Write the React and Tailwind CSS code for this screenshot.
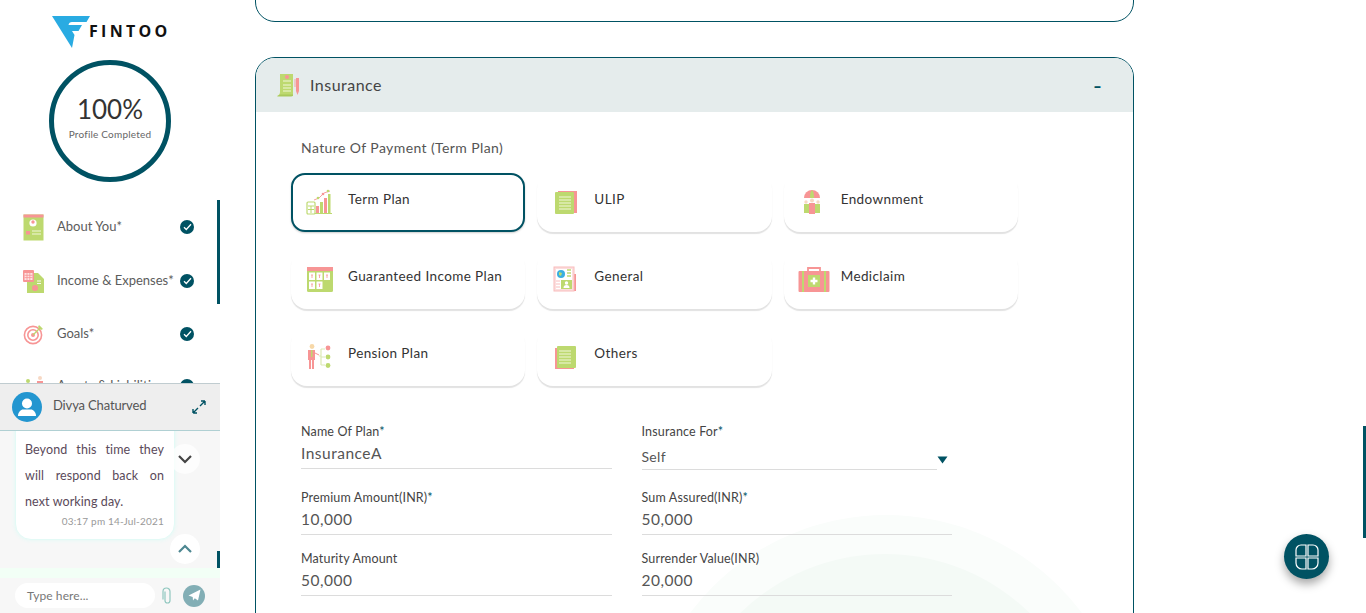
const G = "#bdd96f";
const R = "#f79595";
const T = "#005263";

const Doc = ({ flip }) => (
  <svg width="26" height="26" viewBox="0 0 26 26">
    <rect x={flip ? 3 : 6} y={flip ? 5 : 2} width="19" height="22" fill={R} />
    <rect x={flip ? 5 : 3} y={flip ? 3 : 3} width="19" height="22" rx="1" fill={G} />
    <path d="M7 8h12M7 11h12M7 14h12M7 17h12M7 20h12" stroke="#f1f7da" strokeWidth="1" />
  </svg>
);

const TermIcon = () => (
  <svg width="26" height="26" viewBox="0 0 26 26">
    <rect x="1" y="13" width="8" height="12" rx="1" fill="#fff" stroke={G} strokeWidth="1.2" />
    <path d="M2 17h6M5 17v7M2 20.5h6" stroke={G} strokeWidth="1" />
    <rect x="10" y="17" width="3" height="7" fill={R} />
    <rect x="14" y="13" width="3" height="11" fill={G} />
    <rect x="18" y="9" width="3" height="15" fill={R} />
    <rect x="22" y="5" width="2.5" height="19" fill={G} />
    <path d="M9 24.5h17" stroke={G} strokeWidth="1" />
    <path d="M8 11l5-2 5-5 6-2" fill="none" stroke={R} strokeWidth="0.9" />
    <circle cx="12" cy="9" r="1.3" fill={G} />
    <circle cx="17" cy="5" r="1.3" fill={R} />
    <circle cx="22" cy="2" r="1.3" fill={G} />
  </svg>
);

const EndowIcon = () => (
  <svg width="26" height="26" viewBox="0 0 26 26">
    <path d="M5 9a8 8 0 0 1 16 0z" fill={R} />
    <path d="M11 9a3 8 0 0 1 2-8 3 8 0 0 1 2 8z" fill={G} />
    <circle cx="13" cy="11.500" r="2" fill="#f7d8c4" />
    <circle cx="7" cy="13" r="1.7" fill="#f7d8c4" />
    <circle cx="19" cy="13" r="1.7" fill="#f7d8c4" />
    <rect x="5" y="15" width="5" height="9" fill={G} />
    <rect x="16" y="15" width="5" height="9" fill={G} />
    <rect x="10" y="14" width="6" height="11" fill={R} />
  </svg>
);

const GuaranteedIcon = () => (
  <svg width="28" height="26" viewBox="0 0 28 26">
    <rect x="1" y="1" width="26" height="25" rx="1.5" fill={G} />
    <rect x="1" y="1" width="26" height="4" fill={R} />
    {[[3, 6.5], [10.5, 6.5], [18, 6.5], [3, 15.5], [10.5, 15.5]].map(([x, y]) => (
      <g key={`${x}-${y}`}>
        <rect x={x} y={y} width="6" height="7.5" fill="#fff" />
        <path d={`M${x + 2} ${y + 2.5}h2M${x + 3} ${y + 2.5}v3`} stroke={R} strokeWidth="0.8" />
      </g>
    ))}
  </svg>
);

const GeneralIcon = () => (
  <svg width="26" height="26" viewBox="0 0 26 26">
    <rect x="20" y="8" width="4" height="17" fill={R} />
    <rect x="2" y="1" width="20" height="24" fill="#fbdede" stroke="#f9bcbc" />
    <rect x="4" y="3" width="16" height="20" fill="#fff" />
    <circle cx="9" cy="8" r="4" fill="#3aaee0" />
    <path d="M7 6l3 1-1 3-2-1z" fill={G} />
    <path d="M15 4h4M15 7h4M15 10h4" stroke={G} strokeWidth="1.4" />
    <rect x="9" y="14" width="11" height="9" fill={G} />
    <circle cx="14.5" cy="17" r="1.7" fill="#fff" />
    <path d="M11.5 22a3 3 0 0 1 6 0z" fill="#fff" />
    <path d="M4 15h4M4 18h4M4 21h4" stroke="#f9bcbc" strokeWidth="1" />
  </svg>
);

const MediIcon = () => (
  <svg width="32" height="26" viewBox="0 0 32 26" className="ml-[-1px]">
    <path d="M10 6V2h12v4" fill="none" stroke={R} strokeWidth="1.8" />
    <rect x="0.5" y="5" width="31" height="21" rx="1" fill={R} />
    <rect x="4" y="5" width="2" height="21" fill={G} />
    <rect x="26" y="5" width="2" height="21" fill={G} />
    <rect x="10" y="9" width="12" height="12" fill={G} />
    <path d="M16 11.5v7M12.5 15h7" stroke="#fff" strokeWidth="2.4" />
  </svg>
);

const PensionIcon = () => (
  <svg width="26" height="26" viewBox="0 0 26 26">
    <circle cx="6" cy="3.5" r="2.4" fill="#f7d8a8" />
    <rect x="2" y="7" width="7" height="10" fill={R} />
    <rect x="5" y="7" width="1.5" height="7" fill={G} />
    <rect x="3" y="17" width="2" height="9" fill={R} />
    <rect x="6" y="17" width="2" height="9" fill={R} />
    <path d="M9 10l4 2" stroke={R} strokeWidth="1" />
    <path d="M13 13h2M15 6v16M15 6h4M15 14h4M15 22h4" stroke="#dce9b5" strokeWidth="1.2" fill="none" />
    <circle cx="22" cy="5" r="2.4" fill={R} />
    <circle cx="22" cy="14" r="2.4" fill={G} />
    <circle cx="22" cy="22.5" r="2.4" fill={G} />
  </svg>
);

const ScrollIcon = () => (
  <svg width="26" height="27" viewBox="0 0 26 27">
    <path d="M4 2h13v22H1c2-1 3-2 3-4z" fill={G} />
    <path d="M1 24.5h14c2 0 2-1 2-2H4z" fill="#a9c95c" />
    <circle cx="11" cy="5" r="2" fill={R} />
    <path d="M7 9h8M7 13h8M7 16h8M7 19h8" stroke="#f1f7da" strokeWidth="1" />
    <path d="M20 6h3v13l-1.5 4L20 19z" fill={R} />
    <path d="M19 7v8" stroke={R} strokeWidth="0.8" />
  </svg>
);

const AboutIcon = () => (
  <svg width="21" height="27" viewBox="0 0 21 27">
    <rect x="0.5" y="0.5" width="20" height="26" fill={G} />
    <rect x="0.5" y="0.5" width="20" height="3" fill={R} />
    <circle cx="10" cy="9" r="3.6" fill="#fff" />
    <circle cx="10" cy="8" r="1.7" fill={R} />
    <rect x="3" y="17" width="4" height="3.5" fill={R} />
    <path d="M9 17h9M9 20h9" stroke="#f1f7da" strokeWidth="1" />
  </svg>
);

const IncomeIcon = () => (
  <svg width="21" height="23" viewBox="0 0 21 23">
    <path d="M4 3h11l6 6v14H4z" fill={G} />
    <path d="M14 11h4M14 13.5h4" stroke="#fff" strokeWidth="0.9" />
    <circle cx="12" cy="18" r="3" fill={R} />
    <rect x="0" y="0" width="11" height="12" rx="1" fill={R} />
    <rect x="1.5" y="3" width="8" height="7" fill="#fde3e3" />
    <path d="M1.5 5.3h8M1.5 7.6h8M4 3v7M6.8 3v7" stroke={R} strokeWidth="0.8" />
  </svg>
);

const GoalIcon = () => (
  <svg width="21" height="21" viewBox="0 0 21 21">
    <circle cx="10" cy="11" r="8.6" fill="none" stroke={R} strokeWidth="1.6" />
    <circle cx="10" cy="11" r="5.2" fill="none" stroke={R} strokeWidth="1.6" />
    <circle cx="10" cy="11" r="2" fill={R} />
    <path d="M10 11l8-8" stroke={G} strokeWidth="1.3" />
    <path d="M16 1l4 4-2 1-3-3z" fill={G} />
  </svg>
);

const AssetIcon = () => (
  <svg width="24" height="22" viewBox="0 0 24 22">
    <circle cx="5" cy="6" r="2" fill={G} />
    <rect x="2" y="9" width="6" height="10" fill={G} />
    <circle cx="17" cy="3" r="2" fill="#f7d8c4" />
    <rect x="14" y="6" width="6" height="12" fill={R} />
  </svg>
);

const Check = () => (
  <span className="flex h-[14px] w-[14px] shrink-0 items-center justify-center rounded-full bg-[#005263]">
    <svg width="9" height="8" viewBox="0 0 9 8">
      <path d="M1 4.2l2.3 2.3L8 1.3" fill="none" stroke="#fff" strokeWidth="1.3" />
    </svg>
  </span>
);

const navItems = [
  { label: "About You*", icon: <AboutIcon />, h: "h-[54px]" },
  { label: "Income & Expenses*", icon: <IncomeIcon />, h: "h-[54px]" },
  { label: "Goals*", icon: <GoalIcon />, h: "h-[52px]" },
  { label: "Assets & Liabilities", icon: <AssetIcon />, h: "h-[52px]" },
];

const Sidebar = () => (
  <aside className="relative h-[613px] w-[220px] shrink-0 overflow-hidden bg-white">
    <div className="flex h-[60px] items-start pl-[52px] pt-[16px]">
      <svg width="38" height="32" viewBox="0 0 38 32" className="shrink-0">
        <path d="M0 0H38L34.500 6H20Q17 6 16.500 9H30L26.500 15H20L22.500 19L20 32Z" fill="#29abe2" />
      </svg>
      <span className="ml-[-1px] mt-[3px] text-[16px] font-bold leading-[24px] tracking-[3.3px] text-[#111] [font-family:'Open_Sans',sans-serif]">
        FINTOO
      </span>
    </div>
    <div className="ml-[49px] flex h-[122px] w-[122px] flex-col items-center justify-center rounded-full border-[5px] border-[#005263]">
      <span className="mt-[-8px] text-[26px] leading-[32px] text-[#333]">100%</span>
      <span className="mt-[3px] text-[10px] leading-[13px] tracking-[0.2px] text-[#666]">Profile Completed</span>
    </div>
    <div className="pt-[18px]">
      {navItems.map((n) => (
        <div key={n.label} className={`flex items-center pl-[23px] pr-[26px] ${n.h}`}>
          <span className="flex w-[34px] shrink-0 items-center">{n.icon}</span>
          <span className="flex-1 whitespace-nowrap text-[13px] text-[#5c5c5c]">{n.label}</span>
          <Check />
        </div>
      ))}
    </div>
    <div className="absolute left-[217px] top-[200px] h-[104px] w-[3px] bg-[#005263]" />
    <ChatPanel />
  </aside>
);

const ChatPanel = () => (
  <div className="absolute inset-x-0 bottom-0 flex h-[230px] flex-col border-t border-[#c0ccd0] bg-[#f7f7f7]">
    <div className="flex h-[47px] shrink-0 items-center border-b border-[#b0d0d3] bg-[#eeeeee] pl-[12px] pr-[14px]">
      <span className="relative flex h-[30px] w-[30px] shrink-0 items-center justify-center overflow-hidden rounded-full bg-[#2396d0]">
        <svg width="30" height="30" viewBox="0 0 30 30">
          <circle cx="15" cy="11.500" r="5" fill="#fff" />
          <path d="M6 24c0-4 3-6.500 5-6.500h8c2 0 5 2.500 5 6.500z" fill="#fff" />
        </svg>
      </span>
      <span className="mb-[2px] ml-[11px] flex-1 text-[13px] tracking-[-0.15px] text-[#555]">Divya Chaturved</span>
      <svg width="14" height="14" viewBox="0 0 14 14">
        <path d="M8 6l5-5M13 1H9M13 1v4M6 8l-5 5M1 13h4M1 13V9" fill="none" stroke={T} strokeWidth="1.4" />
      </svg>
    </div>
    <div className="relative flex-1 overflow-hidden">
      <div className="ml-[15px] mt-[-10px] h-[119px] w-[160px] rounded-b-[16px] border border-[#e3faf6] bg-white pl-[9px] pr-[10px] pt-[15px] shadow-[0_0_4px_#dffaf6]">
        <p className="text-justify text-[12.500px] leading-[26px] tracking-[0.1px] text-[#5a4a5a] [text-align-last:justify]">
          Beyond this time they
        </p>
        <p className="text-justify text-[12.500px] leading-[26px] tracking-[0.1px] text-[#5a4a5a] [text-align-last:justify]">
          will respond back on
        </p>
        <p className="text-[12.500px] leading-[26px] tracking-[0.1px] text-[#5a4a5a]">next working day.</p>
        <p className="mt-[-1px] text-right text-[10px] leading-[14px] tracking-[0.2px] text-[#999]">03:17 pm 14-Jul-2021</p>
      </div>
      <button className="absolute left-[170px] top-[13px] flex h-[30px] w-[30px] items-center justify-center rounded-full bg-white/70">
        <svg width="16" height="10" viewBox="0 0 16 10">
          <path d="M2 2l6 6 6-6" fill="none" stroke="#444" strokeWidth="2.2" />
        </svg>
      </button>
      <button className="absolute left-[170px] top-[103px] flex h-[30px] w-[30px] items-center justify-center rounded-full bg-white">
        <svg width="16" height="10" viewBox="0 0 16 10">
          <path d="M2 8l6-6 6 6" fill="none" stroke="#4d8791" strokeWidth="2.2" />
        </svg>
      </button>
      <div className="absolute left-[217px] top-[120px] h-[18px] w-[3px] bg-[#005263]" />
    </div>
    <div className="h-[10px] shrink-0 bg-[#f2fff6]" />
    <div className="flex h-[35px] shrink-0 items-center pl-[15px]">
      <div className="flex h-[25px] w-[140px] items-center rounded-full bg-white pl-[12px] text-[12px] tracking-[0.1px] text-[#777]">
        Type here...
      </div>
      <svg width="12" height="17" viewBox="0 0 12 17" className="ml-[5px]">
        <path d="M4 4v9a2.500 2.500 0 0 0 5 0V4a3.500 3.500 0 0 0-7 0v8" transform="translate(1 .5)" fill="none" stroke="#8fc7bf" strokeWidth="1.2" />
      </svg>
      <span className="ml-[11px] flex h-[22px] w-[22px] items-center justify-center rounded-full bg-[#82aeb5]">
        <svg width="13" height="13" viewBox="0 0 13 13">
          <path d="M0.500 6.500L12.500 0.500 10 11.500 6.800 9.300 5 11.500 4.700 8z" fill="#fff" />
        </svg>
      </span>
    </div>
  </div>
);

const plans = [
  { label: "Term Plan", icon: <TermIcon />, active: true },
  { label: "ULIP", icon: <Doc /> },
  { label: "Endownment", icon: <EndowIcon /> },
  { label: "Guaranteed Income Plan", icon: <GuaranteedIcon /> },
  { label: "General", icon: <GeneralIcon /> },
  { label: "Mediclaim", icon: <MediIcon /> },
  { label: "Pension Plan", icon: <PensionIcon /> },
  { label: "Others", icon: <Doc flip /> },
];

const PlanCard = ({ label, icon, active }) => (
  <div
    className={`flex h-[59px] items-start bg-white ${
      active
        ? "rounded-[14px] border-2 border-[#005263] shadow-[0_1px_2px_#ccc]"
        : "rounded-[16px] border-2 border-transparent shadow-[0_2px_1px_#e2e2e2]"
    }`}
  >
    <span className="ml-[13px] mt-[13px] flex h-[28px] w-[42px] shrink-0 items-center">{icon}</span>
    <span className="mt-[14px] whitespace-nowrap text-[13.500px] leading-[20px] tracking-[0.4px] text-[#333]">{label}</span>
  </div>
);

const Field = ({ label, req, value, h = "h-[66px]" }) => (
  <div className={h}>
    <div className="text-[12.500px] leading-[18px] tracking-[0.16px] text-[#444]">
      {label}
      {req && <span className="text-[#005263]">*</span>}
    </div>
    <div className="mt-[1px] h-[27px] border-b border-[#dcdcdc] text-[15.500px] leading-[22px] tracking-[0.5px] text-[#555]">
      {value}
    </div>
  </div>
);

const SelectField = () => (
  <div className="h-[66px]">
    <div className="text-[12.500px] leading-[18px] tracking-[0.16px] text-[#444]">
      Insurance For<span className="text-[#005263]">*</span>
    </div>
    <div className="mt-[2px] flex h-[27px] items-end">
      <div className="h-full w-[295px] border-b border-[#dcdcdc] pt-[4px] text-[14px] leading-[20px] tracking-[0.3px] text-[#555]">Self</div>
      <svg width="11" height="8" viewBox="0 0 11 8" className="mb-[6px]">
        <path d="M0.500 0.500h10L5.500 7.500z" fill={T} />
      </svg>
    </div>
  </div>
);

const Main = () => (
  <main className="relative h-[613px] flex-1 overflow-hidden bg-white">
    <div className="absolute left-[421px] top-[515px] h-[490px] w-[490px] rounded-full bg-[#fafdfb]" />
    <div className="absolute left-[458px] top-[554px] h-[414px] w-[414px] rounded-full bg-[#f4faf6]" />
    <div className="relative ml-[35px] w-[879px]">
      <div className="mt-[-30px] h-[52px] rounded-b-[20px] border border-[#005263]" />
      <section className="mt-[35px] h-[700px] overflow-hidden rounded-t-[20px] border border-[#005263]">
        <header className="flex h-[54px] items-center bg-[#e5ecec] pl-[20px] pr-[31px]">
          <ScrollIcon />
          <span className="mb-[1px] ml-[8px] flex-1 text-[16px] tracking-[0.48px] text-[#444]">Insurance</span>
          <span className="text-[24px] leading-none text-[#005263]">-</span>
        </header>
        <div className="pl-[35px] pt-[26px]">
          <div className="pl-[10px] text-[14px] leading-[20px] tracking-[0.4px] text-[#555]">Nature Of Payment (Term Plan)</div>
          <div className="mt-[15px] grid w-[727px] grid-cols-3 gap-x-[12px] gap-y-[18px]">
            {plans.map((p) => (
              <PlanCard key={p.label} {...p} />
            ))}
          </div>
          <div className="mt-[37px] grid w-[661px] grid-cols-2 gap-x-[30px] pl-[10px]">
            <Field label="Name Of Plan" req value="InsuranceA" />
            <SelectField />
            <Field label="Premium Amount(INR)" req value="10,000" h="h-[61px]" />
            <Field label="Sum Assured(INR)" req value="50,000" h="h-[61px]" />
            <Field label="Maturity Amount" value="50,000" />
            <Field label="Surrender Value(INR)" value="20,000" />
          </div>
        </div>
      </section>
    </div>
    <div className="absolute right-0 top-[426px] h-[112px] w-[3px] bg-[#005263]" />
    <button className="absolute left-[1064px] top-[534px] flex h-[45px] w-[45px] items-center justify-center rounded-full bg-[#005263] shadow-[0_5px_10px_rgba(0,0,0,0.35)]">
      <svg width="26" height="26" viewBox="0 0 26 26" fill="none" stroke="#fff" strokeWidth="1.2">
        <path d="M12 1H7a5 5 0 0 0-5 5v6h10zM14 1h5a5 5 0 0 1 5 5v6H14zM12 14H2v5a6 6 0 0 0 6 6h4zM14 14h10v5a6 6 0 0 1-6 6h-4z" />
      </svg>
    </button>
  </main>
);

export default function App() {
  return (
    <div className="flex h-[613px] w-[1366px] overflow-hidden bg-white [font-family:'Lato',sans-serif]">
      <Sidebar />
      <Main />
    </div>
  );
}
